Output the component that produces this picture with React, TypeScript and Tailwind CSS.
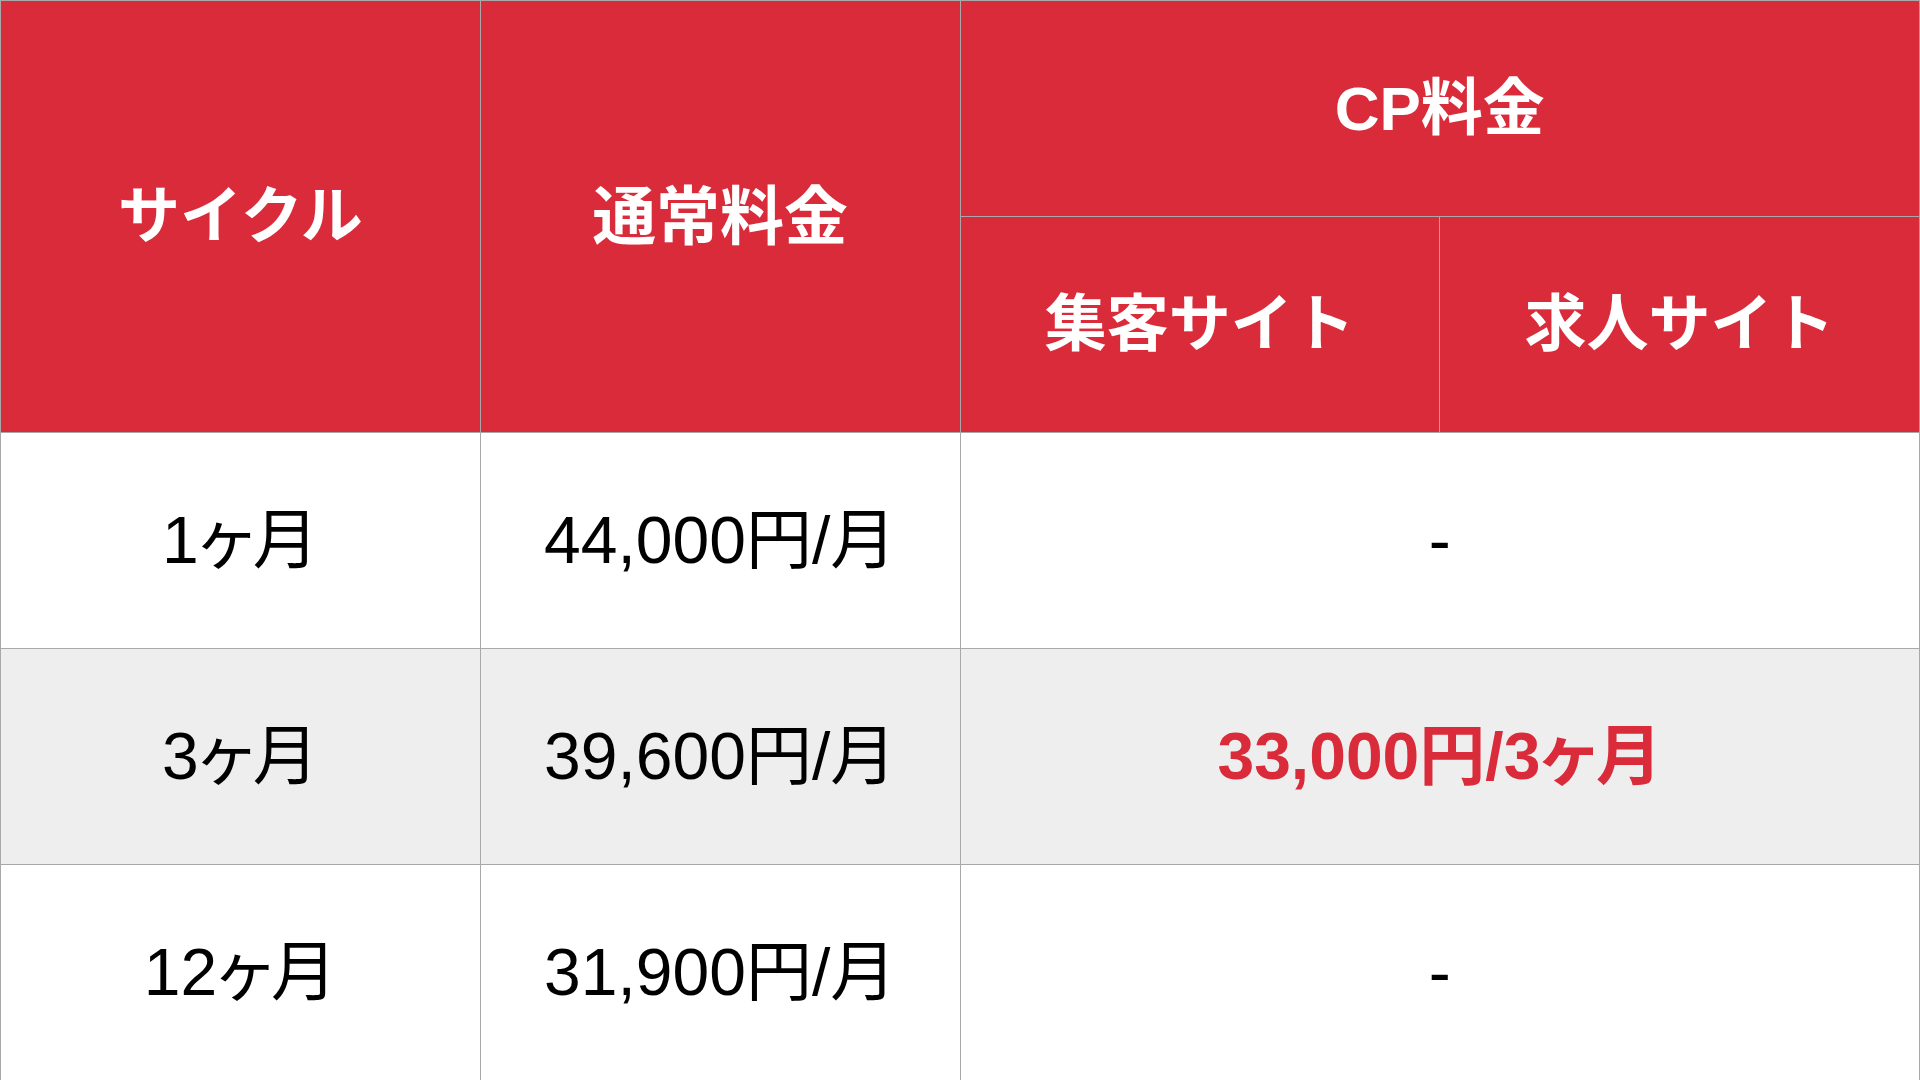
import React from "react";

const font = { fontFamily: '"Liberation Sans", "Noto Sans CJK JP", sans-serif' };

const head =
  "flex items-center justify-center bg-[#d92b3a] text-white font-bold text-[62px] border-r border-b border-[#a8a8a8]";
const cell =
  "flex items-center justify-center text-[66px] [font-feature-settings:'palt'] border-r border-b border-[#a8a8a8]";

const rows = [
  { cycle: "1ヶ月", normal: "44,000円/月", cp: "-", gray: false },
  { cycle: "3ヶ月", normal: "39,600円/月", cp: "33,000円/3ヶ月", gray: true },
  { cycle: "12ヶ月", normal: "31,900円/月", cp: "-", gray: false },
];

export default function App() {
  return (
    <div className="w-[1920px] h-[1080px] overflow-hidden bg-white" style={font}>
      <div className="grid grid-cols-4 grid-rows-[repeat(5,216px)] border-t border-l border-[#a8a8a8]">
        <div className={`${head} row-span-2`}>サイクル</div>
        <div className={`${head} row-span-2 text-[64px]`}>通常料金</div>
        <div className={`${head} col-span-2`}>CP料金</div>
        <div className={head}>集客サイト</div>
        <div className={head}>求人サイト</div>
        {rows.map((r) => {
          const bg = r.gray ? "bg-[#eeeeee]" : "bg-white";
          return (
            <React.Fragment key={r.cycle}>
              <div className={`${cell} ${bg} text-black`}>{r.cycle}</div>
              <div className={`${cell} ${bg} text-black`}>{r.normal}</div>
              <div
                className={`${cell} ${bg} col-span-2 ${
                  r.cp !== "-" ? "text-[#d92b3a] font-bold" : "text-black"
                }`}
              >
                {r.cp}
              </div>
            </React.Fragment>
          );
        })}
      </div>
    </div>
  );
}
